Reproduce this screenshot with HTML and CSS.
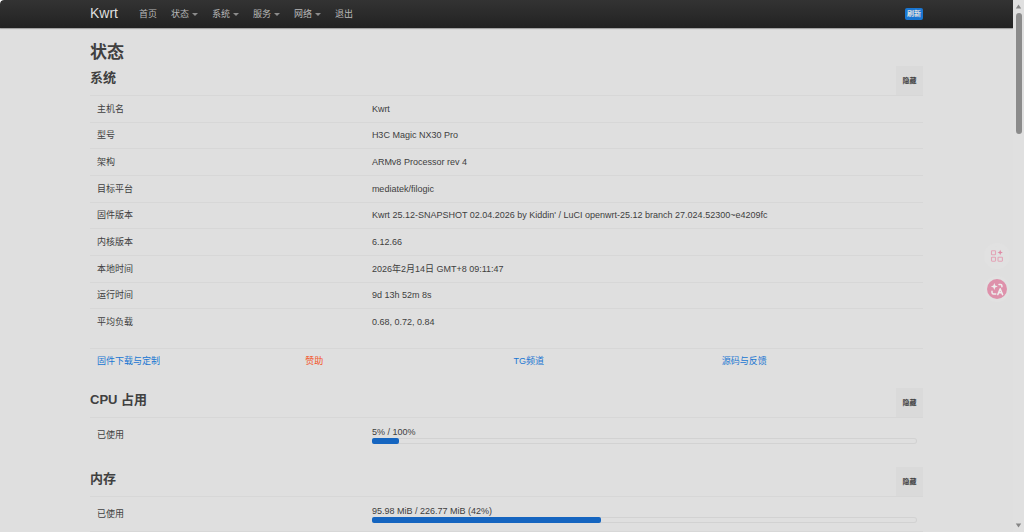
FILE: index.html
```html
<!DOCTYPE html>
<html lang="zh-CN">

<head>
    <meta charset="utf-8">
    <meta name="viewport" content="width=device-width, initial-scale=1.0">
    <title>Kwrt</title>
    <link rel="stylesheet" href="styles.css">
</head>

<body>
    <div class="page">
        <header>
            <div class="fill">
                <a class="brand" href="#">Kwrt</a>
                <nav>
                    <a href="#">首页</a>
                    <a href="#" class="menu">状态</a>
                    <a href="#" class="menu">系统</a>
                    <a href="#" class="menu">服务</a>
                    <a href="#" class="menu">网络</a>
                    <a href="#">退出</a>
                </nav>
                <button class="refresh">刷新</button>
            </div>
        </header>

        <main>
            <h2>状态</h2>

            <section>
                <div class="title">
                    <h3>系统</h3>
                    <button class="hide">隐藏</button>
                </div>
                <table class="table info">
                    <tr><th>主机名</th><td>Kwrt</td></tr>
                    <tr><th>型号</th><td>H3C Magic NX30 Pro</td></tr>
                    <tr><th>架构</th><td>ARMv8 Processor rev 4</td></tr>
                    <tr><th>目标平台</th><td>mediatek/filogic</td></tr>
                    <tr><th>固件版本</th><td>Kwrt 25.12-SNAPSHOT 02.04.2026 by Kiddin' / LuCI openwrt-25.12 branch 27.024.52300~e4209fc</td></tr>
                    <tr><th>内核版本</th><td>6.12.66</td></tr>
                    <tr><th>本地时间</th><td>2026年2月14日 GMT+8 09:11:47</td></tr>
                    <tr><th>运行时间</th><td>9d 13h 52m 8s</td></tr>
                    <tr><th>平均负载</th><td>0.68, 0.72, 0.84</td></tr>
                </table>
                <table class="table links">
                    <tr>
                        <td><a href="#">固件下载与定制</a></td>
                        <td><a href="#" class="sponsor">赞助</a></td>
                        <td><a href="#">TG频道</a></td>
                        <td><a href="#">源码与反馈</a></td>
                    </tr>
                </table>
            </section>

            <section>
                <div class="title">
                    <h3>CPU 占用</h3>
                    <button class="hide">隐藏</button>
                </div>
                <table class="table usage">
                    <tr>
                        <th>已使用</th>
                        <td>5% / 100%<div class="bar"><div class="value" style="width: 5%"></div></div></td>
                    </tr>
                </table>
            </section>

            <section>
                <div class="title">
                    <h3>内存</h3>
                    <button class="hide">隐藏</button>
                </div>
                <table class="table usage last">
                    <tr>
                        <th>已使用</th>
                        <td>95.98 MiB / 226.77 MiB (42%)<div class="bar"><div class="value" style="width: 42%"></div></div></td>
                    </tr>
                </table>
            </section>
        </main>
    </div>

    <div class="scrollbar">
        <svg width="7" height="5" viewBox="0 0 7 5"><path d="M3.5 0.5 L6.2 4.5 H0.8 Z" fill="#858585"/></svg>
        <div class="thumb"></div>
        <svg width="7" height="5" viewBox="0 0 7 5"><path d="M3.5 4.5 L6.2 0.5 H0.8 Z" fill="#858585"/></svg>
    </div>

    <!-- floating tools on the right edge -->
    <div class="tools">
        <button class="tool" aria-label="apps">
            <svg width="14" height="14" viewBox="0 0 14 14" fill="none" stroke="#e3a5b8" stroke-width="1.1">
                <rect x="1.5" y="1.8" width="4" height="4" rx="0.6"/>
                <rect x="1.5" y="8.2" width="4" height="4" rx="0.6"/>
                <rect x="8" y="8.2" width="4.4" height="4" rx="0.6"/>
                <path d="M10.2 0.8 L11 2.7 L12.9 3.5 L11 4.3 L10.2 6.2 L9.4 4.3 L7.5 3.5 L9.4 2.7 Z" fill="#df8ca7" stroke="none"/>
            </svg>
        </button>
        <button class="tool translate" aria-label="translate">
            <svg width="20" height="20" viewBox="0 0 20 20" fill="none" stroke="#eee" stroke-width="1.5" stroke-linecap="round" stroke-linejoin="round">
                <path d="M7.3 4 L8.2 6.6 L10.8 7.5 L8.2 8.4 L7.3 11 L6.4 8.4 L3.8 7.5 L6.4 6.6 Z" fill="#eee" stroke="none"/>
                <path d="M12 5.4 H13.6 Q14.9 5.4 14.9 6.7 V7.8"/>
                <path d="M5 12.2 V13.5 Q5 15 6.5 15 H8.8"/>
                <path d="M10.8 15.6 L13.2 9.8 L15.6 15.6 M11.7 13.7 H14.7"/>
            </svg>
        </button>
    </div>
</body>

</html>
```

FILE: styles.css
```css
* {
    box-sizing: border-box;
}

html {
    background: #fff;
}

body {
    margin: 0;
    height: 100vh;
    display: flex;
    overflow: hidden;
    background: #dfdfdf;
    border-top-left-radius: 4px;
    color: #404040;
    font-family: "Liberation Sans", "Noto Sans CJK SC", sans-serif;
    font-size: 9px;
    line-height: 12px;
}

a {
    color: #1976d2;
    text-decoration: none;
}

button {
    border: 0;
    padding: 0;
    font-family: inherit;
    font-size: 7px;
    font-weight: bold;
    line-height: 12px;
    cursor: pointer;
}

.page {
    flex: 1;
    height: 100%;
    overflow: hidden;
}

header {
    background: linear-gradient(#333, #222);
    border-top-left-radius: 4px;
    box-shadow: 0 1px 1px rgba(0, 0, 0, 0.3);
}

.fill,
main {
    max-width: 833px;
    margin: 0 auto;
}

.fill {
    display: flex;
    align-items: center;
    height: 28px;
}

.brand {
    color: #dfdfdf;
    font-size: 14px;
    line-height: 24px;
    padding-bottom: 2px;
    margin-right: 21px;
}

nav {
    display: flex;
    gap: 14px;
    flex: 1;
}

nav a {
    display: flex;
    align-items: center;
    color: #b8b8b8;
}

.menu::after {
    content: "";
    margin-left: 3px;
    border: 3px solid transparent;
    border-top-color: #8c8c8c;
    border-bottom: 0;
}

.refresh {
    background: #1976d2;
    color: #e0e0e0;
    border-radius: 2px;
    padding: 0 2px;
}

main {
    padding-top: 12px;
}

h2,
h3 {
    margin: 0;
}

h2 {
    font-size: 17px;
    line-height: 26px;
}

h3 {
    font-size: 13px;
    line-height: 24px;
}

section {
    margin-bottom: 15px;
}

.title {
    display: flex;
    justify-content: space-between;
    align-items: flex-start;
}

.hide {
    background: #dadada;
    color: #404040;
    width: 27px;
    height: 29px;
}

.table {
    width: 100%;
    table-layout: fixed;
    border-collapse: separate;
    border-spacing: 0;
}

.table th,
.table td {
    padding: 6px 7px;
    border-top: 1px solid #d7d7d7;
    font-weight: normal;
    text-align: left;
    vertical-align: middle;
}

.table th {
    width: 33%;
}

.info {
    height: 240px;
    margin-bottom: 13px;
}

.table.usage td {
    padding: 8px 6px 8px 7px;
}

.last {
    border-bottom: 1px solid #d7d7d7;
}

.links .sponsor {
    color: #f4511e;
}

.bar {
    height: 6px;
    border-radius: 3px;
    box-shadow: inset 0 0 0 1px #d2d2d2;
}

.value {
    height: 100%;
    background: #1565c0;
    border-radius: 2px;
}

.scrollbar {
    display: flex;
    flex-direction: column;
    align-items: center;
    width: 11px;
    padding: 4px 0;
    background: #e0e0e0;
}

.thumb {
    width: 6px;
    height: 23%;
    margin: 4px 0 auto;
    border-radius: 3px;
    background: #8b8b8b;
}

.tools {
    position: absolute;
    right: 17px;
    top: 246px;
    display: grid;
    gap: 13px;
}

.tool {
    display: grid;
    place-items: center;
    width: 20px;
    height: 20px;
    border-radius: 50%;
    background: #e1e1e1;
    box-shadow: 0 0 0 3px #e1e1e1;
}

.translate {
    background: #de91ab;
}
```
